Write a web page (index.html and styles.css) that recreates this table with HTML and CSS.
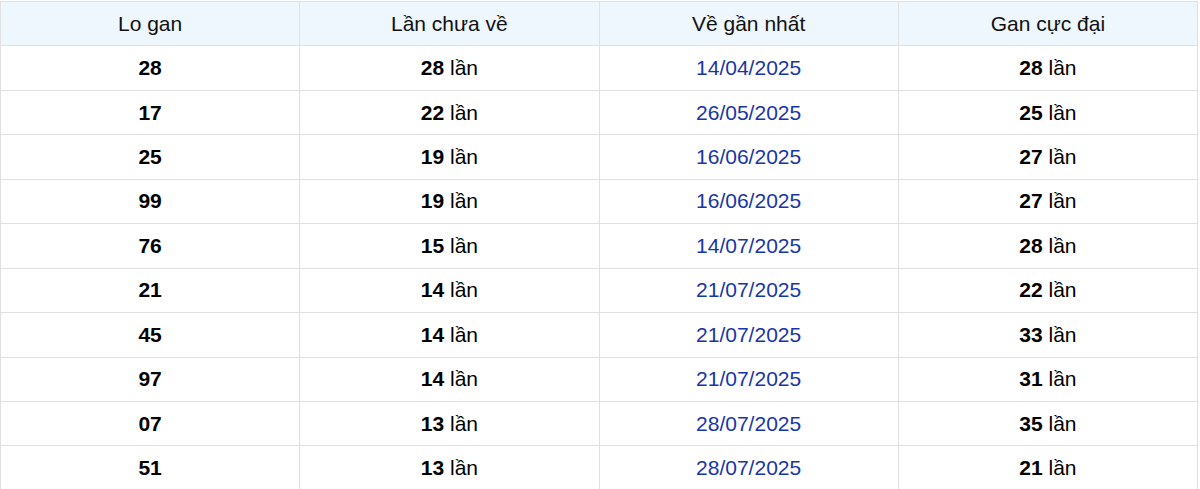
FILE: index.html
```html
<!DOCTYPE html>
<html lang="vi">
<head>
<meta charset="utf-8">
<link rel="stylesheet" href="styles.css">
</head>
<body>
<table class="gan-table">
  <thead>
    <tr><th>Lo gan</th><th>Lần chưa về</th><th>Về gần nhất</th><th>Gan cực đại</th></tr>
  </thead>
  <tbody>
    <tr><td><b>28</b></td><td><b>28</b> lần</td><td class="date">14/04/2025</td><td><b>28</b> lần</td></tr>
    <tr><td><b>17</b></td><td><b>22</b> lần</td><td class="date">26/05/2025</td><td><b>25</b> lần</td></tr>
    <tr><td><b>25</b></td><td><b>19</b> lần</td><td class="date">16/06/2025</td><td><b>27</b> lần</td></tr>
    <tr><td><b>99</b></td><td><b>19</b> lần</td><td class="date">16/06/2025</td><td><b>27</b> lần</td></tr>
    <tr><td><b>76</b></td><td><b>15</b> lần</td><td class="date">14/07/2025</td><td><b>28</b> lần</td></tr>
    <tr><td><b>21</b></td><td><b>14</b> lần</td><td class="date">21/07/2025</td><td><b>22</b> lần</td></tr>
    <tr><td><b>45</b></td><td><b>14</b> lần</td><td class="date">21/07/2025</td><td><b>33</b> lần</td></tr>
    <tr><td><b>97</b></td><td><b>14</b> lần</td><td class="date">21/07/2025</td><td><b>31</b> lần</td></tr>
    <tr><td><b>07</b></td><td><b>13</b> lần</td><td class="date">28/07/2025</td><td><b>35</b> lần</td></tr>
    <tr><td><b>51</b></td><td><b>13</b> lần</td><td class="date">28/07/2025</td><td><b>21</b> lần</td></tr>
  </tbody>
</table>
</body>
</html>
```
FILE: styles.css
```css
html, body {
  margin: 0;
  padding: 0;
  background: #fff;
}
body {
  padding-top: 1px;
  font-family: "Liberation Sans", Arial, sans-serif;
  color: #000;
}
.gan-table {
  width: 1198px;
  border-collapse: collapse;
  table-layout: fixed;
  font-size: 21px;
}
.gan-table th,
.gan-table td {
  border: 1px solid #e0e0e0;
  height: 43.44px;
  padding: 0;
  text-align: center;
  vertical-align: middle;
  line-height: 24px;
}
.gan-table th {
  background: #eef6fe;
  font-weight: normal;
  color: #111;
}
.gan-table td b {
  font-weight: bold;
}
.gan-table td.date {
  color: #1835a8;
}
```
